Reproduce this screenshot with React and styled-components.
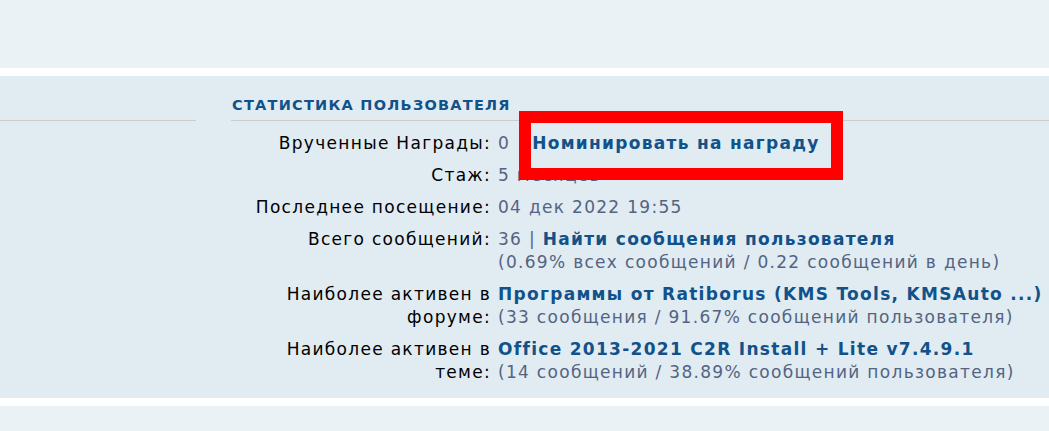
import React from 'react'
import styled, { createGlobalStyle } from 'styled-components'

const GlobalStyle = createGlobalStyle`
  html, body {
    margin: 0;
    padding: 0;
    background: #ffffff;
    overflow: hidden;
  }
  body {
    font-family: "DejaVu Sans", Verdana, sans-serif;
  }
`;

const Page = styled.div`
  width: 1049px;
  height: 431px;
  display: flex;
  flex-direction: column;
  gap: 8px;
`;

const Band = styled.div`
  background: #eaf2f6;
  height: ${props => props.$height}px;
  flex: none;
`;

const Panel = styled.section`
  position: relative;
  background: #e1ebf2;
  height: 322px;
  flex: none;
  display: flex;
  gap: 35px;
`;

const LeftColumn = styled.div`
  width: 196px;
  flex: none;
`;

const RightColumn = styled.div`
  flex: none;
  width: 900px;
`;

const Heading = styled.h3`
  margin: 0;
  height: 45px;
  box-sizing: border-box;
  padding: 20px 0 0 1px;
  border-bottom: 1px solid #cccccc;
  font-size: 14.5px;
  line-height: 18px;
  font-weight: bold;
  text-transform: uppercase;
  color: #105289;
  letter-spacing: 1.25px;
`;

const Details = styled.dl`
  margin: 0;
  padding: 11px 0 0 20px;
  display: grid;
  grid-template-columns: 240px 1fr;
  column-gap: 7px;
  row-gap: 9px;
  font-size: 17px;
  line-height: 23px;
  letter-spacing: 1.3px;
`;

const Term = styled.dt`
  margin: 0;
  text-align: right;
  color: #000000;
`;

const Value = styled.dd`
  margin: 0;
  color: #536482;
  white-space: nowrap;
`;

const Link = styled.a`
  color: #105289;
  font-weight: bold;
  text-decoration: none;
  margin-left: ${props => props.$gap || 0}px;
`;

const Highlight = styled.div`
  position: absolute;
  left: 519px;
  top: 35px;
  width: 324px;
  height: 69px;
  box-sizing: border-box;
  border: 12px solid #ff0000;
  pointer-events: none;
`;

const stats = [
  { label: 'Врученные Награды:', value: <>0<Link href="#" $gap={22}>Номинировать на награду</Link></> },
  { label: 'Стаж:', value: '5 месяцев' },
  { label: 'Последнее посещение:', value: '04 дек 2022 19:55' },
  {
    label: 'Всего сообщений:',
    value: <>36 | <Link href="#">Найти сообщения пользователя</Link><br />(0.69% всех сообщений / 0.22 сообщений в день)</>,
  },
  {
    label: 'Наиболее активен в форуме:',
    value: <><Link href="#">Программы от Ratiborus (KMS Tools, KMSAuto ...)</Link><br />(33 сообщения / 91.67% сообщений пользователя)</>,
  },
  {
    label: 'Наиболее активен в теме:',
    value: <><Link href="#">Office 2013-2021 C2R Install + Lite v7.4.9.1</Link><br />(14 сообщений / 38.89% сообщений пользователя)</>,
  },
];

const App = () => {
  return (
    <Page>
      <GlobalStyle />
      <Band $height={68} />
      <Panel>
        <LeftColumn>
          <Heading />
        </LeftColumn>
        <RightColumn>
          <Heading>Статистика пользователя</Heading>
          <Details>
            {stats.map(item => (
              <React.Fragment key={item.label}>
                <Term>{item.label}</Term>
                <Value>{item.value}</Value>
              </React.Fragment>
            ))}
          </Details>
        </RightColumn>
        <Highlight />
      </Panel>
      <Band $height={40} />
    </Page>
  )
}

export default App
